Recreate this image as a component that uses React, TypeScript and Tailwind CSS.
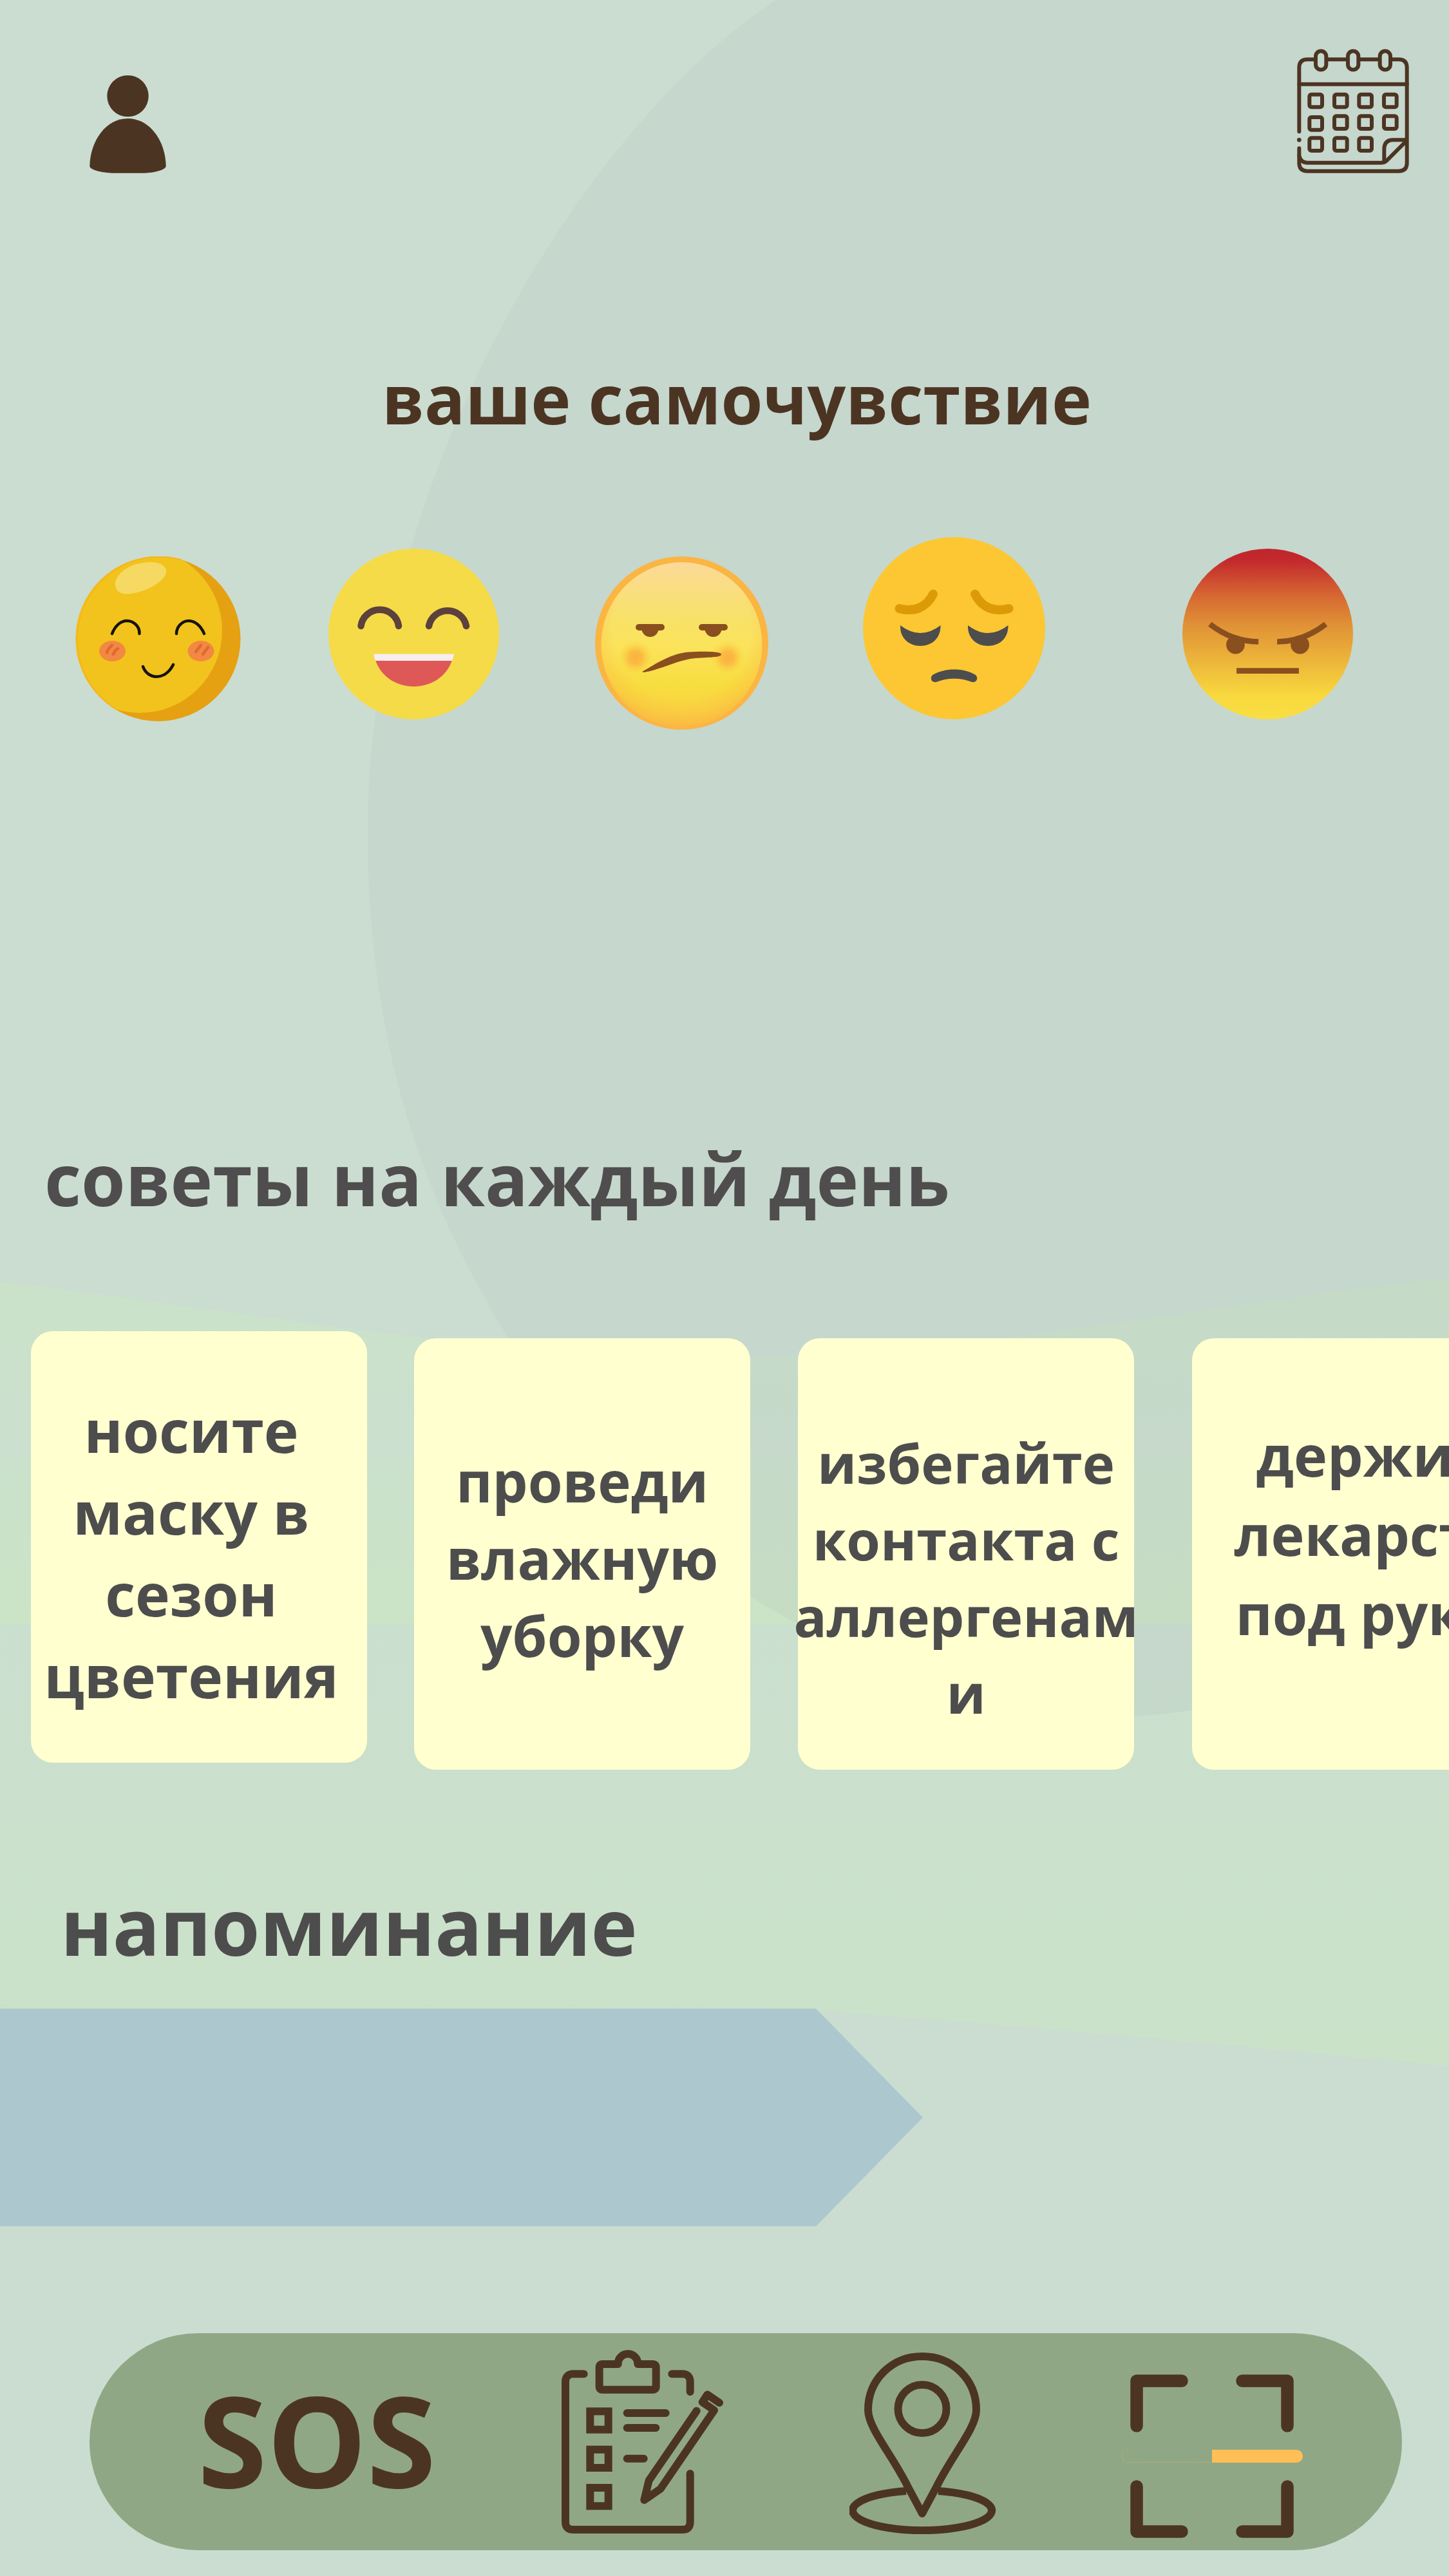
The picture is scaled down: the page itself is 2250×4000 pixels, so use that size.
import React from "react";

const BROWN = "#4C3423";

function Backdrop() {
  return (
    <svg
      className="absolute inset-0 h-full w-full"
      viewBox="0 0 2250 4000"
      preserveAspectRatio="none"
      aria-hidden="true"
    >
      <defs>
        <linearGradient id="hillTop" x1="0" y1="0" x2="0" y2="1">
          <stop offset="0" stopColor="#CBE2C9" />
          <stop offset="1" stopColor="#CBE0CE" />
        </linearGradient>
        <linearGradient id="hillMid" x1="0" y1="0" x2="0" y2="1">
          <stop offset="0" stopColor="#CBE1CC" />
          <stop offset="1" stopColor="#CBE4C6" />
        </linearGradient>
        <linearGradient id="hillLow" x1="0" y1="0" x2="0" y2="1">
          <stop offset="0" stopColor="#CADFCE" />
          <stop offset="1" stopColor="#CBE2C9" />
        </linearGradient>
      </defs>
      <path
        d="M0 1990 C350 2032 760 2108 1120 2108 C1480 2108 1900 2022 2250 1984 V2262 H0 Z"
        fill="url(#hillTop)"
      />
      <rect x="0" y="2261" width="2250" height="261" fill="url(#hillMid)" />
      <path
        d="M0 2521 H2250 V3208 C1950 3180 1650 3150 1270 3122 C1150 3114 1050 3114 900 3119 L0 3160 Z"
        fill="url(#hillLow)"
      />
      <path
        d="M1205 0 C900 200 571 750 571 1290 C571 1600 645 1850 797 2090 C880 2260 1010 2390 1166 2480 C1380 2610 1600 2680 1800 2662 C2000 2640 2130 2590 2250 2520 V0 Z"
        fill="#A1ABB8"
        fillOpacity="0.12"
      />
    </svg>
  );
}

function UserIcon() {
  return (
    <svg className="h-[153px] w-[119px]" viewBox="117 105 358 459" fill={BROWN} aria-hidden="true">
      <circle cx="296" cy="204" r="97" />
      <path d="M118 534 C118 420 190 309 296 309 C402 309 474 420 474 534 C466 552 410 564 360 564 H232 C182 564 126 552 118 534 Z" />
    </svg>
  );
}

const DAY_CELLS = [
  [160, 289], [276, 289], [391, 289], [507, 289],
  [160, 395], [276, 390], [391, 390], [507, 390],
  [160, 492], [276, 492], [391, 492],
];

function CalendarIcon() {
  return (
    <svg
      className="h-[193px] w-[174px]"
      viewBox="102 77 522 579"
      fill="none"
      stroke={BROWN}
      strokeWidth="18"
      strokeLinecap="round"
      strokeLinejoin="round"
      aria-hidden="true"
    >
      <path d="M112 462 V164 Q112 126 150 126 H184 M243 126 H334 M393 126 H484 M543 126 H576 Q614 126 614 164 V608 Q614 646 576 646 H150 Q112 646 112 608 V540" />
      <path d="M112 241 H614" />
      <circle cx="112" cy="501" r="10" fill={BROWN} stroke="none" />
      <rect x="189" y="87" width="49" height="87" rx="24.5" />
      <rect x="339" y="87" width="49" height="87" rx="24.5" />
      <rect x="488" y="87" width="49" height="87" rx="24.5" />
      {DAY_CELLS.map(([x, y]) => (
        <rect key={`${x}-${y}`} x={x} y={y} width="59" height="59" rx="9" />
      ))}
      <path d="M112 575 Q120 607 150 607 H495 Q510 607 520 597 L610 507" />
      <path d="M508 601 V545 Q508 501 550 501 H612" />
    </svg>
  );
}

function BlushingFace() {
  return (
    <svg className="size-[257px]" viewBox="0 0 257 257" fill="none" strokeLinecap="round" aria-hidden="true">
      <defs>
        <clipPath id="blushClip">
          <circle cx="128.5" cy="128" r="128" />
        </clipPath>
      </defs>
      <g clipPath="url(#blushClip)">
        <rect width="257" height="257" fill="#E5A112" />
        <circle cx="100" cy="115" r="128" fill="#F2C31C" />
      </g>
      <path d="M66 239 A128 128 0 0 1 164 5" stroke="#F7B51E" strokeWidth="2" />
      <path d="M64 51 C56 36 73 18 95 12 C118 6 138 9 141 21 C143 34 122 48 103 54 C85 60 69 60 64 51 Z" fill="#F6D963" />
      <g stroke="#15130E" strokeWidth="4.5">
        <path d="M57 120 C62 107 71 100 80 100 C91 100 100 109 99.5 120" />
        <path d="M157 120 C157 109 166 100 176 100 C186 100 195 108 200 120" />
        <path d="M105 171 C112 191 139 194 152 168" />
      </g>
      <ellipse cx="57.5" cy="147" rx="20.5" ry="16" fill="#F38842" />
      <ellipse cx="195" cy="147" rx="20.5" ry="16" fill="#F38842" />
      <g stroke="#DF6A33" strokeWidth="4.5">
        <path d="M57 138 Q51 143 49 149" />
        <path d="M66 143 Q61 146 59 152" />
        <path d="M195 138 L187 148" />
        <path d="M206 141 L198 152" />
      </g>
    </svg>
  );
}

function LaughingFace() {
  return (
    <svg className="size-[265px]" viewBox="0 0 265 265" fill="none" aria-hidden="true">
      <circle cx="132.5" cy="132.5" r="132.5" fill="#F5DB47" />
      <g stroke="#5C413D" strokeWidth="10.5" strokeLinecap="round">
        <path d="M50.5 120 A29.5 29 0 0 1 109 120" />
        <path d="M156 120 A29.5 29 0 0 1 214 120" />
      </g>
      <path d="M73 173 H192 C184 198 160 214 132.5 214 C105 214 81 198 73 173 Z" fill="#DF5858" />
      <path d="M70 163.5 H195 Q194 169 192 174 H73 Q71 169 70 163.5 Z" fill="#F7EEF0" />
    </svg>
  );
}

function SkepticalFace() {
  return (
    <svg className="size-[269px]" viewBox="0 0 269 269" fill="none" aria-hidden="true">
      <defs>
        <linearGradient id="skepticalFill" x1="0" y1="0" x2="0" y2="1">
          <stop offset="0" stopColor="#FBDA98" />
          <stop offset="0.35" stopColor="#F8E267" />
          <stop offset="0.5" stopColor="#FBE35C" />
          <stop offset="0.75" stopColor="#F8DD3F" />
          <stop offset="1" stopColor="#F9D142" />
        </linearGradient>
        <radialGradient id="skepticalRim" gradientUnits="userSpaceOnUse" cx="134.5" cy="112" r="157">
          <stop offset="0.68" stopColor="#FBB542" stopOpacity="0" />
          <stop offset="0.86" stopColor="#FBB542" stopOpacity="0.35" />
          <stop offset="1" stopColor="#FBB542" />
        </radialGradient>
        <radialGradient id="cheekGlow">
          <stop offset="0" stopColor="#FBB13F" />
          <stop offset="0.4" stopColor="#FBB541" stopOpacity="0.85" />
          <stop offset="1" stopColor="#F8DA3D" stopOpacity="0.1" />
        </radialGradient>
      </defs>
      <circle cx="134.5" cy="134.5" r="134.5" fill="#FBB542" />
      <ellipse cx="134.5" cy="137" rx="125" ry="128" fill="url(#skepticalFill)" />
      <ellipse cx="134.5" cy="137" rx="126" ry="129" fill="url(#skepticalRim)" />
      <circle cx="63" cy="157" r="26" fill="url(#cheekGlow)" />
      <circle cx="206" cy="157" r="26" fill="url(#cheekGlow)" />
      <g fill="#8A4F1E">
        <rect x="63" y="105" width="45" height="10" rx="5" />
        <path d="M72 113 H99 C97 121 92 125 85.5 125 C79 125 74 121 72 113 Z" />
        <rect x="161" y="105" width="45" height="10" rx="5" />
        <path d="M170 113 H197 C195 121 190 125 183.5 125 C177 125 172 121 170 113 Z" />
        <path d="M73 179 C95 166 118 151 145 148.5 C165 147 196 147 196 152 C196 158 170 156 148 159 C125 163 100 176 76 180 Z" />
      </g>
    </svg>
  );
}

function SadFace() {
  return (
    <svg className="size-[283px]" viewBox="0 0 283 283" fill="none" aria-hidden="true">
      <circle cx="141.5" cy="141.5" r="141.5" fill="#FCC732" />
      <g stroke="#DC9B06" strokeWidth="14" strokeLinecap="round">
        <path d="M56.5 111 C80 117 99 109 109 88.5" />
        <path d="M226.5 111 C203 117 184 109 174 88.5" />
      </g>
      <g fill="#4D4D4D">
        <path d="M58 137 Q89 161 120.5 137 C121 157 107 169 89 169 C72 169 57 157 58 137 Z" />
        <path d="M163 137 Q194 161 225.5 137 C226 157 212 169 194 169 C177 169 162 157 163 137 Z" />
        <path d="M114 225 C105 227 103 216 110 213 C128 203 156 203 173 213 C180 216 178 227 169 225 C151 218 132 218 114 225 Z" />
      </g>
    </svg>
  );
}

function AngryFace() {
  return (
    <svg className="size-[265px]" viewBox="108 96 794 794" fill="none" aria-hidden="true">
      <defs>
        <linearGradient id="angryFill" x1="0" y1="0" x2="0" y2="1">
          <stop offset="0" stopColor="#BE272C" />
          <stop offset="0.07" stopColor="#C3292D" />
          <stop offset="0.27" stopColor="#D66632" />
          <stop offset="0.45" stopColor="#E09236" />
          <stop offset="0.66" stopColor="#EDB63A" />
          <stop offset="0.86" stopColor="#F8D83E" />
          <stop offset="1" stopColor="#F9DF43" />
        </linearGradient>
      </defs>
      <circle cx="505" cy="493" r="397" fill="url(#angryFill)" />
      <g stroke="#8A4F1E" strokeWidth="26">
        <path d="M236 447 Q340 528 462 529" />
        <path d="M775 447 Q671 528 549 529" />
        <path d="M360 664 H650" />
      </g>
      <circle cx="355" cy="543" r="43" fill="#8A4F1E" />
      <circle cx="655" cy="543" r="43" fill="#8A4F1E" />
    </svg>
  );
}

function ChecklistIcon() {
  return (
    <svg
      className="h-[286px] w-[252px]"
      viewBox="100 86 756 858"
      fill="none"
      stroke={BROWN}
      strokeWidth="36"
      strokeLinecap="round"
      strokeLinejoin="round"
      aria-hidden="true"
    >
      <path d="M204 198 H155 Q118 198 118 235 V888 Q118 923 155 923 H663 Q699 923 699 888 V662" />
      <path d="M614 198 H663 Q699 198 699 235 V281" />
      <path d="M363 152 V150 A46 46 0 0 1 455 150 V152 H526 Q540 152 540 166 V257 Q540 271 526 271 H290 Q276 271 276 257 V166 Q276 152 290 152 H363" />
      <g strokeLinejoin="miter">
        <rect x="233" y="372" width="85" height="85" />
        <rect x="233" y="550" width="85" height="85" />
        <rect x="233" y="728" width="85" height="85" />
      </g>
      <path d="M405 380 H585 M405 449 H539 M405 592 H483" />
      <path d="M729 370 L507 694 L485 785 L561 733 L811 367 L756 329 L779 294 L835 332" />
    </svg>
  );
}

function PinIcon() {
  return (
    <svg
      className="h-[282px] w-[228px]"
      viewBox="20 33 228 282"
      fill="none"
      stroke={BROWN}
      strokeWidth="12"
      strokeLinejoin="round"
      aria-hidden="true"
    >
      <path d="M133 283 L110 240 C85 190 49 150 49 122 C49 75 86 39 133 39 C180 39 217 75 217 122 C217 150 181 190 156 240 Z" />
      <circle cx="133" cy="120.5" r="37.5" />
      <path d="M158 248 A108 31 0 1 1 108 248" />
    </svg>
  );
}

function ScanIcon() {
  return (
    <svg
      className="h-[254px] w-[281px]"
      viewBox="0 0 281 254"
      fill="none"
      stroke={BROWN}
      strokeWidth="19.5"
      strokeLinecap="round"
      strokeLinejoin="round"
      aria-hidden="true"
    >
      <path d="M93 10 H23 V80 M187 10 H257 V80 M23 174 V244 H93 M257 174 V244 H187" />
      <path d="M140 117 H271 A10 10 0 0 1 271 137 H140 Z" fill="#FFBF57" stroke="none" />
      <path
        d="M9 117 Q0 120 0.5 127 Q1 136 10 136.5 H140"
        stroke="#FFBF57"
        strokeWidth="1"
        strokeLinecap="butt"
        strokeDasharray="1 2"
        strokeOpacity="0.7"
      />
    </svg>
  );
}

const MOODS = [
  { label: "спокойно", face: <BlushingFace />, place: "pb-3" },
  { label: "отлично", face: <LaughingFace />, place: "ml-[136px] pb-4" },
  { label: "так себе", face: <SkepticalFace />, place: "ml-[149px]" },
  { label: "плохо", face: <SadFace />, place: "ml-[147px] pb-4" },
  { label: "ужасно", face: <AngryFace />, place: "ml-[213px] pb-4" },
];

const TIPS = [
  {
    lines: ["носите", "маску в", "сезон", "цветения"],
    card: "pt-[91px] pr-6",
    text: "text-[91px] leading-[127px]",
  },
  {
    lines: ["проведи", "влажную", "уборку"],
    card: "mt-[11px] ml-[73px] pt-[161px]",
    text: "text-[87px] leading-[120px]",
  },
  {
    lines: ["избегайте", "контакта с", "аллергенам", "и"],
    card: "mt-[11px] ml-[74px] pt-[134px]",
    text: "text-[85px] leading-[119px]",
  },
  {
    lines: ["держите", "лекарства", "под рукой"],
    card: "mt-[11px] ml-[90px] pt-[120px] pl-[84px]",
    text: "text-[88px] leading-[123px]",
  },
];

export default function App() {
  return (
    <div className="relative min-h-screen overflow-hidden bg-[#CBDDD1] font-['Open_Sans','Noto_Sans',sans-serif] font-bold">
      <Backdrop />
      <div className="relative flex flex-col">
        <header className="flex items-end justify-between pt-[76px] pr-[62px] pl-[139px]">
          <button type="button" aria-label="Профиль">
            <UserIcon />
          </button>
          <button type="button" aria-label="Календарь">
            <CalendarIcon />
          </button>
        </header>

        <main>
          <section>
            <h1 className="mt-[276px] pl-[38px] text-center text-[105px] leading-[148px] text-[#4C3423]">
              ваше самочувствие
            </h1>
            <div className="mt-[141px] flex h-[299px] items-end pl-[117px]">
              {MOODS.map((mood) => (
                <button key={mood.label} type="button" aria-label={mood.label} className={`shrink-0 ${mood.place}`}>
                  {mood.face}
                </button>
              ))}
            </div>
          </section>

          <section>
            <h2 className="mt-[619px] pl-[69px] text-[111px] leading-[156px] text-[#4F4D4D]">
              советы на каждый день
            </h2>
            <ul className="mt-[159px] flex items-start overflow-hidden pl-12">
              {TIPS.map((tip) => (
                <li
                  key={tip.lines[0]}
                  className={`h-[670px] w-[522px] shrink-0 rounded-[34px] bg-[#FFFFD0] text-[#4D4D4D] ${tip.card}`}
                >
                  <p className={`flex flex-col items-center whitespace-nowrap ${tip.text}`}>
                    {tip.lines.map((line) => (
                      <span key={line}>{line}</span>
                    ))}
                  </p>
                </li>
              ))}
            </ul>
          </section>

          <section>
            <h2 className="mt-[156px] pl-[94px] text-[122px] leading-[172px] text-[#4D4D4D]">напоминание</h2>
            <div className="mt-[43px] h-[338px] w-[1433px] max-w-full bg-[#ACC8CE] [clip-path:polygon(0_0,calc(100%-166px)_0,100%_50%,calc(100%-166px)_100%,0_100%)]" />
          </section>
        </main>

        <nav className="mt-[166px] mr-[73px] mb-10 ml-[139px] flex h-[337px] items-center gap-[195px] rounded-full bg-[#90A785] pl-[168px]">
          <a href="#sos" className="pb-2 text-[195px] leading-none text-[#4C3423]">
            SOS
          </a>
          <a href="#diary" aria-label="Дневник">
            <ChecklistIcon />
          </a>
          <a href="#map" aria-label="Карта" className="pt-1">
            <PinIcon />
          </a>
          <a href="#scan" aria-label="Сканер" className="pt-11">
            <ScanIcon />
          </a>
        </nav>
      </div>
    </div>
  );
}
